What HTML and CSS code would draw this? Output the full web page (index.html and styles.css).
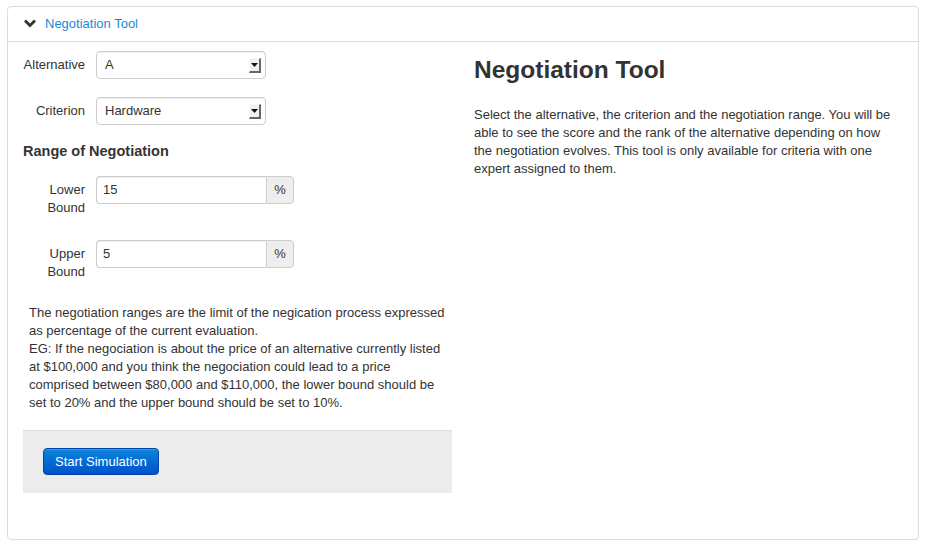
FILE: index.html
```html
<!DOCTYPE html>
<html>
<head>
<meta charset="utf-8">
<link rel="stylesheet" href="styles.css">
</head>
<body>
<div class="panel">
  <div class="panel-head">
    <svg class="chev" width="12" height="9" viewBox="0 0 12 9"><path d="M1 1.5 L6 6.5 L11 1.5" fill="none" stroke="#333" stroke-width="2.8"/></svg>
    <a class="panel-title" href="#">Negotiation Tool</a>
  </div>
  <div class="panel-body">
    <div class="left">
      <div class="row sel-row">
        <label class="lbl">Alternative</label>
        <div class="select"><span>A</span><span class="arrow"><svg width="7" height="4" viewBox="0 0 7 4"><path d="M0 0 H7 L3.5 4 Z" fill="#111"/></svg></span></div>
      </div>
      <div class="row sel-row">
        <label class="lbl">Criterion</label>
        <div class="select"><span>Hardware</span><span class="arrow"><svg width="7" height="4" viewBox="0 0 7 4"><path d="M0 0 H7 L3.5 4 Z" fill="#111"/></svg></span></div>
      </div>
      <h4 class="range-title">Range of Negotiation</h4>
      <div class="row rng-row">
        <label class="lbl">Lower Bound</label>
        <div class="group"><div class="input">15</div><div class="addon">%</div></div>
      </div>
      <div class="row rng-row">
        <label class="lbl">Upper Bound</label>
        <div class="group"><div class="input">5</div><div class="addon">%</div></div>
      </div>
      <p class="explain">The negotiation ranges are the limit of the negication process expressed as percentage of the current evaluation.<br>EG: If the negociation is about the price of an alternative currently listed at $100,000 and you think the negociation could lead to a price comprised between $80,000 and $110,000, the lower bound should be set to 20% and the upper bound should be set to 10%.</p>
      <div class="actions"><button class="btn">Start Simulation</button></div>
    </div>
    <div class="right">
      <h2 class="title">Negotiation Tool</h2>
      <p class="desc">Select the alternative, the criterion and the negotiation range. You will be able to see the score and the rank of the alternative depending on how the negotiation evolves. This tool is only available for criteria with one expert assigned to them.</p>
    </div>
  </div>
</div>
</body>
</html>
```
FILE: styles.css
```css
* { box-sizing: border-box; }
html, body { margin: 0; padding: 0; background: #fff; }
body {
  font-family: "Liberation Sans", Arial, sans-serif;
  font-size: 13px;
  line-height: 18px;
  color: #333;
  padding: 6px 6px 7px 7px;
}
.panel {
  border: 1px solid #dddddd;
  border-radius: 4px;
  height: 534px;
}
.panel-head {
  height: 35px;
  border-bottom: 1px solid #dddddd;
  display: flex;
  align-items: center;
  padding-left: 16px;
  padding-bottom: 1px;
}
.chev { margin-right: 9px; }
.panel-title { color: #1a8bd1; text-decoration: none; font-size: 13px; }
.panel-body {
  padding: 9px 15px 15px 15px;
  display: grid;
  grid-template-columns: 429px 1fr;
  column-gap: 22px;
}
.row { display: flex; align-items: flex-start; }
.lbl {
  width: 62px;
  margin-right: 11px;
  text-align: right;
  padding-top: 5px;
  line-height: 18px;
}
.sel-row { margin-bottom: 19px; height: 27px; }
.select {
  width: 170px;
  height: 28px;
  border: 1px solid #cccccc;
  border-radius: 4px;
  display: flex;
  align-items: center;
  justify-content: space-between;
  padding: 0 4px 0 8px;
  background: #fff;
  box-shadow: inset 0 1px 1px rgba(0,0,0,0.06);
}
.arrow {
  width: 12px;
  height: 15px;
  background: #f0f0f0;
  border-right: 2px solid #666;
  border-bottom: 2px solid #666;
  border-top: 1px solid #fafafa;
  border-left: 1px solid #fafafa;
  display: flex;
  align-items: center;
  justify-content: center;
}
.range-title {
  margin: -2px 0 15px 0;
  font-size: 14.5px;
  font-weight: bold;
  line-height: 20px;
}
.rng-row { margin-bottom: 23px; }
.rng-row:last-of-type { margin-bottom: 0; }
.group { display: flex; height: 28px; }
.input {
  width: 170px;
  height: 28px;
  border: 1px solid #cccccc;
  border-right: none;
  border-radius: 4px 0 0 4px;
  padding: 4px 6px;
  box-shadow: inset 0 1px 1px rgba(0,0,0,0.06);
}
.addon {
  width: 28px;
  height: 28px;
  border: 1px solid #cccccc;
  border-radius: 0 4px 4px 0;
  background: #eeeeee;
  text-align: center;
  padding-top: 4px;
}
.explain {
  margin: 21px 0 18px 6px;
  line-height: 18px;
}
.actions {
  background: #ececec;
  border-top: 1px solid #dddddd;
  height: 63px;
  padding: 17px 20px;
}
.btn {
  font-family: "Liberation Sans", Arial, sans-serif;
  font-size: 13px;
  color: #fff;
  height: 27px;
  padding: 0 11px;
  border: 1px solid #0044aa;
  border-radius: 4px;
  background: linear-gradient(#0a84da, #0052cc);
  box-shadow: inset 0 1px 0 rgba(255,255,255,0.2);
}
.right { max-width: 422px; }
.title {
  margin: 4px 0 0 0;
  font-size: 24.5px;
  line-height: 30px;
  font-weight: bold;
  color: #333;
}
.desc {
  margin: 21px 0 0 0;
  line-height: 18px;
}
```
